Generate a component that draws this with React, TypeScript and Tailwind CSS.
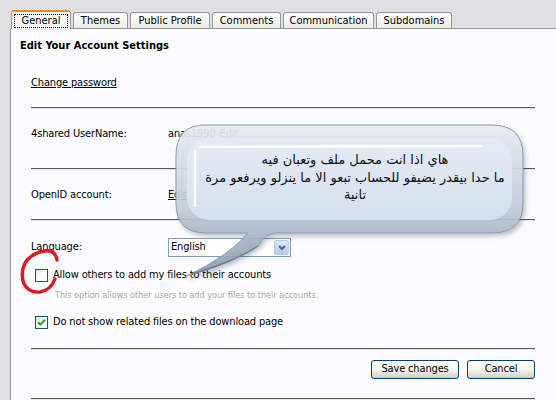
import type { ReactNode } from 'react'

const font = "font-['DejaVu_Sans_Condensed','DejaVu_Sans',sans-serif]"

const tabs = ['General', 'Themes', 'Public Profile', 'Comments', 'Communication', 'Subdomains']
const tabWidths = [60, 55, 80, 69, 91, 76]

function Tab({ label, width, active }: { label: string; width: number; active?: boolean }) {
  if (active) {
    return (
      <div
        style={{ width }}
        className="relative z-10 -mb-px flex h-[19px] items-center justify-center rounded-t-[3px] border-x border-t-2 border-x-[#919b9c] border-t-[#e68b2c] bg-[#fcfcfe] text-[11px] text-black"
      >
        <span className="border border-dotted border-black px-[6px] leading-[12px]">{label}</span>
      </div>
    )
  }
  return (
    <div
      style={{ width }}
      className="flex h-[16px] items-center justify-center rounded-t-[3px] border-x border-t border-[#919b9c] bg-gradient-to-b from-white to-[#ecebe5] text-[11px] leading-none text-black"
    >
      {label}
    </div>
  )
}

function Rule({ className = '' }: { className?: string }) {
  return <div className={`w-[504px] border-t border-b border-t-[#5a5a5a] border-b-[#e4e4e8] ${className}`} />
}

function Checkbox({ checked }: { checked?: boolean }) {
  return (
    <div className="flex h-[13px] w-[13px] shrink-0 items-center justify-center border border-[#1c5180] bg-gradient-to-br from-[#dcdcd7] via-white to-white">
      {checked ? (
        <svg width="9" height="9" viewBox="0 0 9 9">
          <path d="M1 4.2 L3.4 6.6 L8 1.8" stroke="#21a121" strokeWidth="2" fill="none" />
        </svg>
      ) : null}
    </div>
  )
}

function XPButton({ children, width }: { children: ReactNode; width: number }) {
  return (
    <div
      style={{ width }}
      className="flex h-[19px] items-center justify-center rounded-[3px] border border-[#003c74] bg-gradient-to-b from-white via-[#f4f4f0] to-[#d6d0c5] text-[11px] text-black shadow-[inset_0_-1px_0_#c1ccd1]"
    >
      {children}
    </div>
  )
}

function Bubble() {
  const outline =
    'M205 125 L492 125 Q523 125 523 156 L523 203 Q523 233 492 233 L276 233 Q264 234 259 245 Q236 262 187 276 Q230 255 248 233 L206 233 Q176 233 176 203 L176 156 Q176 125 205 125 Z'
  return (
    <div className="pointer-events-none absolute left-0 top-0 h-[400px] w-[556px]">
      <svg width="556" height="400" className="absolute left-0 top-0">
        <defs>
          <linearGradient id="edge" x1="0" y1="0" x2="0" y2="1">
            <stop offset="0" stopColor="#e8edf4" />
            <stop offset="0.55" stopColor="#c3cedc" />
            <stop offset="1" stopColor="#8597ae" />
          </linearGradient>
          <linearGradient id="inner" x1="0" y1="0" x2="0" y2="1">
            <stop offset="0" stopColor="#e3ebf6" />
            <stop offset="1" stopColor="#d8e3f0" />
          </linearGradient>
          <filter id="sh" x="-10%" y="-10%" width="130%" height="140%">
            <feDropShadow dx="2" dy="3" stdDeviation="2" floodColor="#3a4a60" floodOpacity="0.35" />
          </filter>
        </defs>
        <path d={outline} fill="url(#edge)" fillOpacity="0.9" stroke="#8a9bb2" strokeWidth="1" filter="url(#sh)" />
        <rect x="187" y="138" width="325" height="82" rx="22" fill="url(#inner)" fillOpacity="0.9" />
        <path d="M200 147 L482 146" stroke="white" strokeWidth="2.5" strokeLinecap="round" opacity="0.95" />
        <path d="M195 151 L195 206" stroke="white" strokeWidth="2.5" strokeLinecap="round" opacity="0.9" />
        <path d="M258 246 Q234 262 192 274" stroke="#5d6f88" strokeWidth="1.5" fill="none" opacity="0.7" />
      </svg>
      <div
        dir="rtl"
        className="absolute left-[185px] top-[151px] w-[340px] text-center font-['DejaVu_Sans',sans-serif] text-[13px] leading-[17.5px] text-[#101018]"
      >
        <div>هاي اذا انت محمل ملف وتعبان فيه</div>
        <div>ما حدا بيقدر يضيفو للحساب تبعو الا ما ينزلو ويرفعو مرة</div>
        <div>تانية</div>
      </div>
    </div>
  )
}

function RedCircle() {
  return (
    <svg width="60" height="60" className="pointer-events-none absolute left-[10px] top-[240px]">
      <path
        d="M47 20 Q45 9 34 11 Q22 13 15 23 Q10 33 14 44 Q19 53 30 52 Q41 50 45 39"
        stroke="#e3141b"
        strokeWidth="3.4"
        fill="none"
        strokeLinecap="round"
      />
    </svg>
  )
}

export default function App() {
  return (
    <div className={`relative h-[400px] w-[556px] overflow-hidden bg-[#e0dfe3] ${font}`}>
      <div className="flex items-end gap-[2px] pl-[11px] pt-[10px]">
        {tabs.map((t, i) => (
          <Tab key={t} label={t} width={tabWidths[i]} active={i === 0} />
        ))}
      </div>
      <div className="ml-[10px] h-[400px] border-l border-t border-[#919b9c] bg-[#fcfcfe] text-[11px] tracking-[-0.15px] text-black">
        <div className="ml-[9px] mt-[9px] flex h-[16px] items-center text-[11px] font-bold tracking-normal">
          Edit Your Account Settings
        </div>
        <div className="pl-[20px]">
          <div className="mt-[21px] flex h-[16px] items-center">
            <span className="underline">Change password</span>
          </div>
          <Rule className="mt-[16px]" />
          <div className="mt-[17px] flex h-[16px] items-center">
            <span className="w-[137px]">4shared UserName:</span>
            <span>anas1990</span>
            <span className="ml-[4px] underline">Edit</span>
          </div>
          <Rule className="mt-[26px]" />
          <div className="mt-[17px] flex h-[16px] items-center">
            <span className="w-[137px]">OpenID account:</span>
            <span className="underline">Edit</span>
          </div>
          <Rule className="mt-[16px]" />
          <div className="mt-[17px] flex h-[19px] items-center">
            <span className="w-[137px]">Language:</span>
            <div className="flex h-[19px] w-[123px] items-center border border-[#7f9db9] bg-white">
              <span className="flex-1 pl-[2px]">English</span>
              <div className="mr-[1px] flex h-[15px] w-[15px] items-center justify-center rounded-[2px] border border-[#b9c9ef] bg-gradient-to-b from-[#e1eafe] to-[#b4c8f6]">
                <svg width="8" height="6" viewBox="0 0 8 6">
                  <path d="M1 1 L4 4 L7 1" stroke="#4d6185" strokeWidth="2" fill="none" />
                </svg>
              </div>
            </div>
          </div>
          <div className="mt-[10px] flex h-[16px] items-center gap-[5px] pl-[4px]">
            <Checkbox />
            <span>Allow others to add my files to their accounts</span>
          </div>
          <div className="mt-[7px] flex h-[12px] items-center pl-[24px] text-[9px] tracking-normal text-[#a8a8a8]">
            This option allows other users to add your files to their accounts.
          </div>
          <div className="mt-[12px] flex h-[16px] items-center gap-[5px] pl-[4px]">
            <Checkbox checked />
            <span>Do not show related files on the download page</span>
          </div>
          <Rule className="mt-[18px]" />
          <div className="mt-[10px] flex w-[504px] justify-end gap-[8px]">
            <XPButton width={88}>Save changes</XPButton>
            <XPButton width={68}>Cancel</XPButton>
          </div>
          <Rule className="mt-[19px]" />
        </div>
      </div>
      <Bubble />
      <RedCircle />
    </div>
  )
}
